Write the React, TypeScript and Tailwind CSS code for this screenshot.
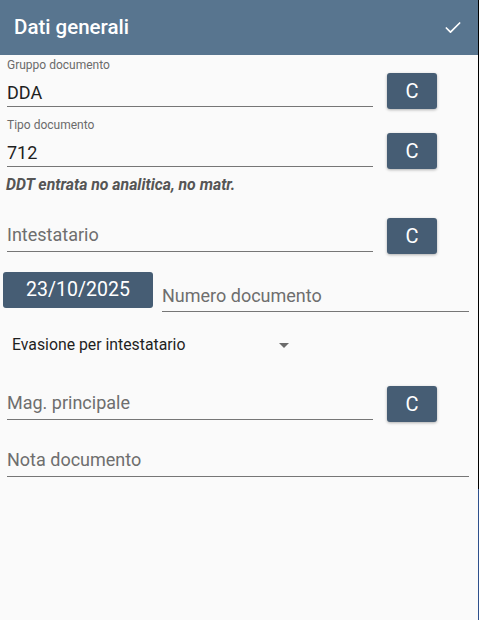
import React from 'react';
import { Check } from 'lucide-react';

const underline = "border-b border-[#767676]";
const lookupBtn = "w-[50px] h-[36px] shrink-0 rounded-[3px] bg-[#465d74] text-white text-[20px] leading-none flex items-center justify-center shadow-[0_1px_3px_rgba(0,0,0,0.3)]";

const LabeledField = ({ label, value }: { label: string; value: string }) => (
  <div className="flex items-start">
    <div className="w-[366px] ml-[7px]">
      <div className="text-[12px] leading-[13px] text-[#6b6b6b]">{label}</div>
      <div className={`h-[35px] flex items-end pb-[1px] ${underline}`}>
        <span className="text-[18px] leading-[24px] text-[#1f1f1f]">{value}</span>
      </div>
    </div>
    <button className={`${lookupBtn} ml-[14px] mt-[14px]`}>C</button>
  </div>
);

const PlaceholderField = ({ placeholder }: { placeholder: string }) => (
  <div className="flex items-start">
    <div className={`w-[366px] ml-[7px] h-[34px] flex items-end pb-[4px] ${underline}`}>
      <span className="text-[18px] leading-[24px] text-[#6e6e6e]">{placeholder}</span>
    </div>
    <button className={`${lookupBtn} ml-[14px]`}>C</button>
  </div>
);

export default function App() {
  return (
    <div className="flex min-h-[620px] bg-[#fafafa] font-['Roboto',sans-serif]">
      <div className="w-[478px] flex flex-col">
        {/* Toolbar */}
        <div className="h-[55px] bg-[#58758f] flex items-center justify-between pl-[14px] pr-[15px]">
          <h1 className="text-white text-[20.5px] font-medium">Dati generali</h1>
          <Check className="w-[20px] h-[20px] text-white" strokeWidth={2} />
        </div>

        <div className="mt-[4px]">
          <LabeledField label="Gruppo documento" value="DDA" />
        </div>
        <div className="mt-[10px]">
          <LabeledField label="Tipo documento" value="712" />
        </div>

        <p className="mt-[7px] ml-[6px] text-[15.8px] leading-[18px] font-bold italic text-[#555555]">
          DDT entrata no analitica, no matr.
        </p>

        <div className="mt-[24px]">
          <PlaceholderField placeholder="Intestatario" />
        </div>

        <div className="mt-[18px] flex items-start">
          <button className="ml-[3px] w-[150px] h-[36px] rounded-[3px] bg-[#465d74] text-white text-[19.5px] flex items-center justify-center">
            23/10/2025
          </button>
          <div className={`ml-[9px] w-[307px] h-[40px] flex items-end pb-[3px] ${underline}`}>
            <span className="text-[18px] leading-[24px] text-[#6e6e6e]">Numero documento</span>
          </div>
        </div>

        <div className="mt-[23px] ml-[12px] w-[277px] flex items-center justify-between">
          <span className="text-[15.8px] leading-[20px] text-[#1f1f1f]">Evasione per intestatario</span>
          <span className="w-0 h-0 border-l-[5px] border-r-[5px] border-t-[5px] border-l-transparent border-r-transparent border-t-[#6b6b6b]" />
        </div>

        <div className="mt-[31px]">
          <PlaceholderField placeholder="Mag. principale" />
        </div>

        <div className={`mt-[21px] ml-[7px] w-[462px] h-[34px] flex items-end pb-[4px] ${underline}`}>
          <span className="text-[18px] leading-[24px] text-[#6e6e6e]">Nota documento</span>
        </div>
      </div>

      {/* window edge */}
      <div className="w-px flex flex-col">
        <div className="h-[489px] bg-black" />
        <div className="flex-1 bg-[#2d4f8c]" />
      </div>
    </div>
  );
}
